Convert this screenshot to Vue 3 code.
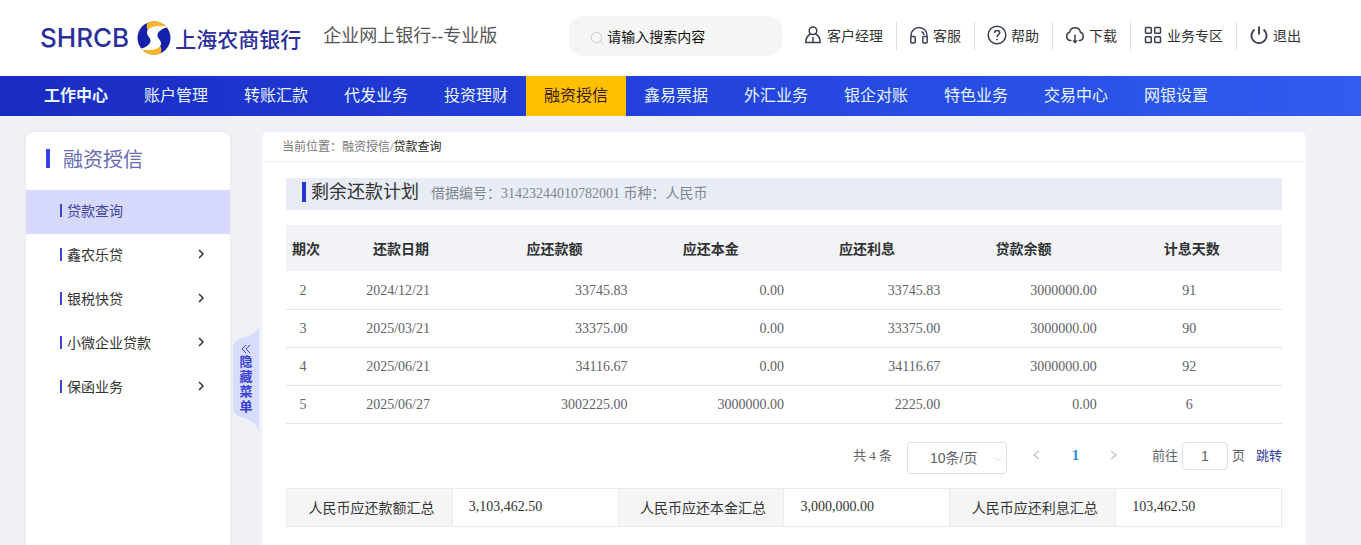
<script setup>
import { ref } from 'vue'

const navItems = ['工作中心', '账户管理', '转账汇款', '代发业务', '投资理财', '融资授信', '鑫易票据', '外汇业务', '银企对账', '特色业务', '交易中心', '网银设置']
const tools = [
  { name: '客户经理', icon: 'person' },
  { name: '客服', icon: 'headset' },
  { name: '帮助', icon: 'help' },
  { name: '下载', icon: 'cloud' },
  { name: '业务专区', icon: 'grid' },
  { name: '退出', icon: 'power' }
]
const menu = [
  { name: '贷款查询', active: true },
  { name: '鑫农乐贷', more: true },
  { name: '银税快贷', more: true },
  { name: '小微企业贷款', more: true },
  { name: '保函业务', more: true }
]
const columns = [
  { name: '期次', kind: 'mid' },
  { name: '还款日期', kind: 'mid' },
  { name: '应还款额', kind: 'num' },
  { name: '应还本金', kind: 'num' },
  { name: '应还利息', kind: 'num' },
  { name: '贷款余额', kind: 'num' },
  { name: '计息天数', kind: 'days' }
]
const rows = [
  ['2', '2024/12/21', '33745.83', '0.00', '33745.83', '3000000.00', '91'],
  ['3', '2025/03/21', '33375.00', '0.00', '33375.00', '3000000.00', '90'],
  ['4', '2025/06/21', '34116.67', '0.00', '34116.67', '3000000.00', '92'],
  ['5', '2025/06/27', '3002225.00', '3000000.00', '2225.00', '0.00', '6']
]
const totals = [
  ['人民币应还款额汇总', '3,103,462.50'],
  ['人民币应还本金汇总', '3,000,000.00'],
  ['人民币应还利息汇总', '103,462.50']
]
const keyword = ref('')
const page = ref('1')
</script>

<template>
  <div class="page">
    <header class="top">
      <a class="logo" href="#" aria-label="上海农商银行">
        <span class="latin">SHRCB</span>
        <svg class="mark" viewBox="0 0 34 34" aria-hidden="true">
          <circle cx="17" cy="17" r="16.500" fill="#1620a8" />
          <path fill="#f7b52c" d="M10.500 1.800C17-1.500 26.500.5 30 7 24 6 17 6 12 11 9.500 8 9 5 10.500 1.800z" />
          <path fill="#f7b52c" d="M23.500 32.200C17 35.500 7.500 33.500 4 27c6 1 13 1 18-4 2.500 3 3 6 1.500 9.200z" />
          <path fill="#fff" d="M31 5.500C21 4 11 5 10 11c-.5 4 4 5.500 3.500 9C13 24 9 26 3 28.500c10 1.500 20 .5 21-5.500.5-4-4-5.500-3.500-9C21 10 25 8 31 5.500z" />
        </svg>
        <span class="cn">上海农商银行</span>
      </a>
      <span class="edition">企业网上银行--专业版</span>
      <label class="search">
        <svg viewBox="0 0 14 14" aria-hidden="true"><circle cx="6.500" cy="6.500" r="5.200" /><path d="M10.300 10.300 13 13" /></svg>
        <input v-model="keyword" type="text" placeholder="请输入搜索内容" aria-label="搜索" />
      </label>
      <nav class="tools">
        <a v-for="t in tools" :key="t.name" href="#">
          <svg viewBox="0 0 20 20" aria-hidden="true">
            <g v-if="t.icon === 'person'"><circle cx="10" cy="5.800" r="3.800" /><path d="M7.500 9C4.500 10.500 2.800 13.500 2.800 17.500h14.400c0-4-1.700-7-4.700-8.500M10 12v5" /></g>
            <g v-else-if="t.icon === 'headset'"><path d="M2 12v-1.500a8 8 0 0 1 16 0V12M12.500 6.500c1.500.7 2.300 1.800 2.500 3.500" /><rect x="1.800" y="11.500" width="4.400" height="6.500" rx="1" /><rect x="13.800" y="11.500" width="4.400" height="6.500" rx="1" /></g>
            <g v-else-if="t.icon === 'help'"><circle cx="10" cy="10" r="8.800" /><path d="M7.500 8c0-3.600 5.200-3.300 5.200-.3 0 2-2.700 2-2.700 4.300M10 13.800v1.500" /></g>
            <g v-else-if="t.icon === 'cloud'"><path d="M6.500 15.500H5A4.300 4.300 0 0 1 4.500 7.300 5.600 5.600 0 0 1 15.500 7.300 4.300 4.300 0 0 1 15 15.500h-1.500M10 9.500V17.500M8 15.500l2 2 2-2" /></g>
            <g v-else-if="t.icon === 'grid'"><rect x="2.500" y="2.500" width="5.800" height="5.800" rx=".8" /><rect x="11.700" y="2.500" width="5.800" height="5.800" rx=".8" /><rect x="2.500" y="11.700" width="5.800" height="5.800" rx=".8" /><rect x="11.700" y="11.700" width="5.800" height="5.800" rx=".8" /></g>
            <g v-else class="bold"><path d="M5.500 4.500a7.600 7.600 0 1 0 9 0M10 1.500v8" /></g>
          </svg>
          <span>{{ t.name }}</span>
        </a>
      </nav>
    </header>

    <nav class="main-nav">
      <a v-for="(n, i) in navItems" :key="n" href="#" :class="{ first: i === 0, active: n === '融资授信' }">{{ n }}</a>
    </nav>

    <div class="body">
      <aside class="side">
        <h2>融资授信</h2>
        <ul>
          <li v-for="m in menu" :key="m.name">
            <a href="#" :class="{ active: m.active }">
              <span class="name">{{ m.name }}</span>
              <svg v-if="m.more" viewBox="0 0 8 10" aria-hidden="true"><path d="M2 1l4 4-4 4" /></svg>
            </a>
          </li>
        </ul>
      </aside>

      <main class="card">
        <button class="fold" type="button">
          <svg class="fold-bg" viewBox="0 0 28 108" preserveAspectRatio="none" aria-hidden="true"><path d="M27 0C26 8 22 9 8 14 3 16 1 19 1 24v58c0 5 2 8 6 9 14 5 19 8 20 17z" /></svg>
          <svg class="fold-arrow" viewBox="0 0 10 10" aria-hidden="true"><path d="M5 1 1 5l4 4M9 1 5 5l4 4" /></svg>
          <span>隐藏菜单</span>
        </button>

        <div class="crumbs">当前位置：<a href="#">融资授信</a>/<b>贷款查询</b></div>

        <div class="content">
          <div class="plan">
            <h1>剩余还款计划</h1>
            <span>借据编号：31423244010782001 币种：人民币</span>
          </div>

          <table class="list">
            <colgroup>
              <col class="c-no" /><col v-for="n in 5" :key="n" class="c-mid" /><col />
            </colgroup>
            <thead>
              <tr><th v-for="c in columns" :key="c.name" :class="c.kind">{{ c.name }}</th></tr>
            </thead>
            <tbody>
              <tr v-for="r in rows" :key="r[0]">
                <td v-for="(v, i) in r" :key="i" :class="columns[i].kind">{{ v }}</td>
              </tr>
            </tbody>
          </table>

          <div class="pager">
            <span class="count">共 4 条</span>
            <span class="size">
              <select aria-label="每页条数"><option>10条/页</option><option>20条/页</option></select>
              <svg viewBox="0 0 10 6" aria-hidden="true"><path d="M1 1l4 4 4-4" /></svg>
            </span>
            <button type="button" aria-label="上一页"><svg viewBox="0 0 8 10"><path d="M7 1 2 5l5 4" /></svg></button>
            <button type="button" class="current">1</button>
            <button type="button" aria-label="下一页"><svg viewBox="0 0 8 10"><path d="M1 1l5 4-5 4" /></svg></button>
            <label class="goto">前往<input v-model="page" type="text" />页</label>
            <a href="#">跳转</a>
          </div>

          <table class="totals">
            <tbody>
              <tr>
                <template v-for="t in totals" :key="t[0]">
                  <th scope="row">{{ t[0] }}</th>
                  <td>{{ t[1] }}</td>
                </template>
              </tr>
            </tbody>
          </table>
        </div>
      </main>
    </div>
  </div>
</template>

<style>
body {
  margin: 0;
  background: #eff1f6;
}
</style>

<style scoped>
.page {
  display: flex;
  flex-direction: column;
  min-height: 100vh;
  font-family: "Liberation Serif", "Noto Sans CJK SC", serif;
  font-size: 14px;
  color: #333;
}
.page *, .page *::before { box-sizing: border-box; }
a { color: inherit; text-decoration: none; }
button, input, select { font: inherit; color: inherit; }
svg { fill: none; stroke: currentColor; flex: none; }

.top {
  display: flex;
  align-items: center;
  height: 76px;
  padding: 0 47px 4px 40px;
  background: #fff;
  white-space: nowrap;
}
.logo {
  display: flex;
  align-items: center;
  padding-top: 4px;
  color: #2a2f9b;
}
.latin { font: 500 26px/34px Inter, sans-serif; }
.mark { width: 34px; height: 34px; margin: 0 4px 0 8px; stroke: none; }
.cn { font: 500 21px/32px "Noto Sans CJK SC", sans-serif; }
.edition { margin-left: 22px; font-size: 18px; line-height: 26px; color: #555; }
.search {
  display: flex;
  align-items: center;
  gap: 3px;
  width: 213px;
  height: 40px;
  margin-left: 72px;
  padding: 4px 12px 0 21px;
  border-radius: 14px;
  background: #f5f5f5;
}
.search svg { width: 14px; height: 14px; color: #ccc; }
.search input {
  flex: 1;
  min-width: 0;
  padding: 0;
  border: 0;
  outline: 0;
  background: none;
  color: #111;
}
.search input::placeholder { color: #111; opacity: 1; }
.tools { display: flex; margin-left: auto; }
.tools a {
  display: flex;
  align-items: center;
  gap: 4px;
  height: 28px;
  padding: 0 13px 2px 12px;
}
.tools a + a { border-left: 1px solid #ddd; }
.tools svg { width: 20px; height: 20px; stroke: #3a3f52; stroke-width: 1.5; }
.tools .bold { stroke-width: 1.9; }

.main-nav {
  display: flex;
  height: 40px;
  padding-left: 26px;
  background: linear-gradient(90deg, #1a2bc3, #2443dc 50%, #305cf0);
  color: #e8f6ff;
}
.main-nav a {
  width: 100px;
  font-size: 16px;
  line-height: 40px;
  text-align: center;
}
.main-nav .first { font-weight: 700; }
.main-nav .active { background: #ffc000; color: #3b1c10; }

.body {
  display: flex;
  flex: 1;
  gap: 32px;
  padding: 16px 55px 0 26px;
}
.side {
  flex: none;
  width: 204px;
  border-radius: 8px 8px 0 0;
  background: #fff;
  box-shadow: 0 0 4px #e2e5ee;
}
.side h2 {
  display: flex;
  align-items: center;
  gap: 13px;
  height: 58px;
  margin: 0;
  padding: 0 0 6px 20px;
  font-size: 20px;
  font-weight: 400;
  color: #6669b0;
}
.side h2::before { content: ""; width: 4px; height: 19px; background: #3b3fe0; }
.side ul { margin: 0; padding: 0; list-style: none; }
.side li a {
  display: flex;
  align-items: center;
  height: 44px;
  padding: 0 25px 4px 34px;
}
.side li a::before { content: ""; width: 2px; height: 13px; margin-right: 5px; background: #3f43d4; }
.side .name { flex: 1; }
.side .active { background: #d6d9fb; color: #43479c; }
.side svg { width: 8px; height: 10px; stroke-width: 1.5; }

.card {
  position: relative;
  flex: 1;
  min-width: 0;
  border-radius: 6px 6px 0 0;
  background: #fff;
}
.fold {
  position: absolute;
  top: 193px;
  left: -30px;
  display: flex;
  flex-direction: column;
  align-items: center;
  width: 28px;
  height: 108px;
  padding: 19px 0 0;
  border: 0;
  background: none;
  color: #3a3fd6;
  font-weight: 700;
  font-size: 13px;
  line-height: 15px;
}
.fold span { position: relative; width: 13px; }
.fold-bg { position: absolute; inset: 0; width: 28px; height: 108px; fill: #d6dcfa; stroke: none; }
.fold-arrow { position: relative; width: 10px; height: 10px; }
.crumbs {
  height: 30px;
  padding-left: 20px;
  border-bottom: 1px solid #eceef2;
  font-size: 12px;
  line-height: 30px;
  color: #777;
}
.crumbs b { font-weight: 400; color: #222; }
.content { padding: 16px 24px 0; }
.plan {
  display: flex;
  align-items: center;
  height: 32px;
  padding: 0 16px 4px;
  background: #e8ecf5;
  color: #808692;
}
.plan h1 {
  display: flex;
  align-items: center;
  gap: 5px;
  margin: 0 12px 0 0;
  font-size: 18px;
  font-weight: 400;
  line-height: 26px;
  color: #333;
}
.plan h1::before { content: ""; width: 4px; height: 20px; background: #2334cf; }

table { width: 100%; border-collapse: collapse; table-layout: fixed; }
.list { margin-top: 15px; color: #606266; }
.c-no { width: 3.4%; }
.c-mid { width: 15.7%; }
.list th { height: 46px; padding: 0; background: #f2f3f6; color: #303133; white-space: nowrap; }
.list th.mid { padding-left: 6px; }
.list td { height: 38px; padding: 2px 0 0; border-bottom: 1px solid #dfe4ea; text-align: center; }
.list td.num { padding-right: 5px; text-align: right; }
.list td.days { padding-right: 5px; }

.pager {
  display: flex;
  align-items: flex-start;
  justify-content: flex-end;
  margin-top: 18px;
  font-size: 13px;
  line-height: 28px;
  color: #606266;
}
.size { position: relative; height: 32px; margin: 0 10px 0 15px; }
.size select {
  display: block;
  width: 100px;
  height: 32px;
  padding: 0 14px 0 22px;
  border: 1px solid #dcdfe6;
  border-radius: 3px;
  background: #fff;
  appearance: none;
  font: 14px "Liberation Sans", "Noto Sans CJK SC", sans-serif;
}
.size svg { position: absolute; top: 14px; right: 5px; width: 8px; height: 6px; color: #ccc; }
.pager button {
  width: 39px;
  height: 28px;
  padding: 0;
  border: 0;
  background: none;
  color: #c0c4cc;
}
.pager button svg { width: 8px; height: 10px; stroke-width: 1.5; }
.pager .current { color: #2f86e0; font-weight: 700; font-size: 14px; }
.goto { display: flex; gap: 4px; margin: 0 11px 0 18px; }
.goto input {
  width: 46px;
  height: 28px;
  padding: 0;
  border: 1px solid #dcdfe6;
  border-radius: 4px;
  font: 14px "Liberation Sans", sans-serif;
  text-align: center;
}
.pager a { color: #34409c; }

.totals { margin-top: 14px; }
.totals th, .totals td { height: 38px; padding: 0; border: 1px solid #ebebeb; }
.totals th { padding-left: 4px; background: #f5f5f5; font-weight: 400; }
.totals td { padding-left: 16px; }
</style>
